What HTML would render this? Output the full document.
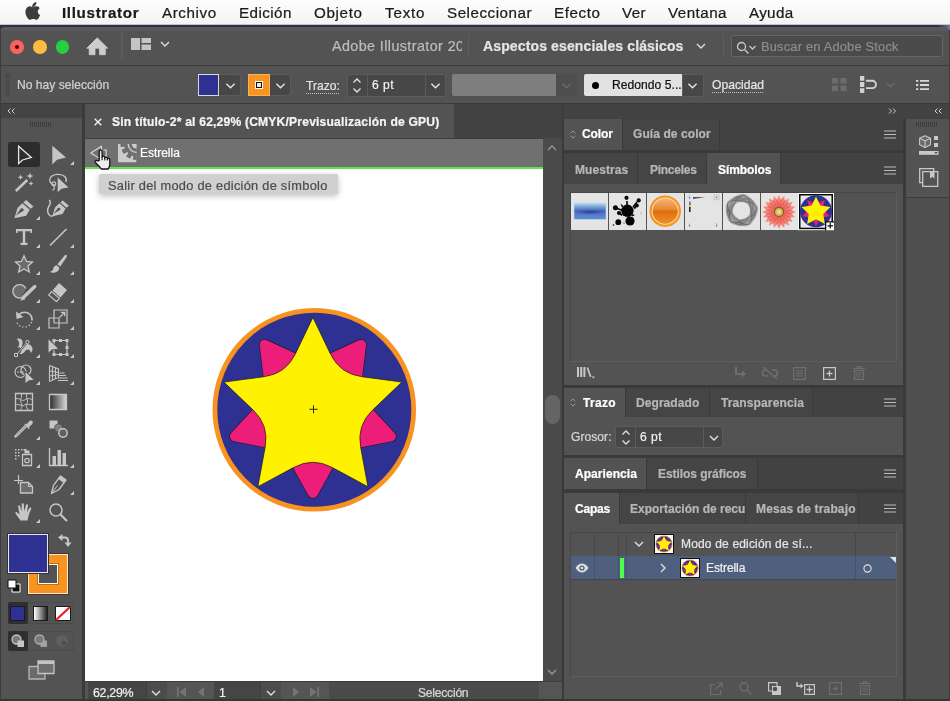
<!DOCTYPE html>
<html lang="es">
<head>
<meta charset="utf-8">
<title>Illustrator</title>
<style>
html,body{margin:0;padding:0}
body{width:950px;height:701px;position:relative;overflow:hidden;background:#535353;font-family:"Liberation Sans",sans-serif;font-size:13px;color:#dcdcdc}
.a{position:absolute}
.t{position:absolute;white-space:nowrap;line-height:1;will-change:transform;-webkit-text-stroke-width:.22px}
.b{font-weight:bold}
svg{position:absolute;overflow:visible}
#menubar{left:0;top:0;width:950px;height:25px;background:linear-gradient(#fdfdfd,#f4f4f4)}
#menubar .t{top:5px;font-size:15.6px;color:#1a1a1a}
.dd{position:absolute;background:#474747;border:1px solid #5c5c5c;box-sizing:border-box}
.tab{position:absolute;box-sizing:border-box;font-weight:bold;font-size:12.5px;color:#b4b4b4;background:#454545;border-right:1px solid #3a3a3a}
.tab.on{background:#535353;color:#ffffff}
.tabbar{position:absolute;background:#424242}
</style>
</head>
<body>

<!-- ===== macOS menu bar ===== -->
<div id="menubar" class="a">
  <svg style="left:21.500px;top:1px" width="19" height="20.200" viewBox="0 0 18 19"><path fill="#3c3c3c" d="M12.6 4.2c.7-.9 1.2-2 1-3.2-1 .1-2.200.7-2.900 1.600-.7.800-1.200 1.900-1.100 3 1.200.1 2.300-.5 3-1.400zM14.900 10c0-2.200 1.800-3.200 1.900-3.300-1-1.500-2.600-1.700-3.200-1.700-1.400-.1-2.600.8-3.300.8-.7 0-1.700-.8-2.800-.8-1.500 0-2.800.9-3.500 2.200-1.500 2.600-.4 6.400 1.100 8.500.7 1 1.500 2.200 2.700 2.100 1.100 0 1.500-.7 2.800-.7 1.300 0 1.600.7 2.800.7 1.200 0 1.900-1 2.600-2.100.8-1.200 1.100-2.300 1.200-2.400-.1 0-2.300-.9-2.300-3.300z"/></svg>
  <span class="t b" style="left:62.3px;font-size:15.2px;top:5.0px;letter-spacing:0.65px">Illustrator</span>
  <span class="t" style="left:162.0px;font-size:15.2px;top:5.0px;letter-spacing:0.58px">Archivo</span>
  <span class="t" style="left:238.7px;font-size:15.2px;top:5.0px;letter-spacing:0.44px">Edición</span>
  <span class="t" style="left:313.7px;font-size:15.2px;top:5.0px;letter-spacing:0.65px">Objeto</span>
  <span class="t" style="left:384.5px;font-size:15.2px;top:5.0px;letter-spacing:0.80px">Texto</span>
  <span class="t" style="left:447.0px;font-size:15.2px;top:5.0px;letter-spacing:0.51px">Seleccionar</span>
  <span class="t" style="left:554.3px;font-size:15.2px;top:5.0px;letter-spacing:0.57px">Efecto</span>
  <span class="t" style="left:622.0px;font-size:15.2px;top:5.0px;letter-spacing:0.36px">Ver</span>
  <span class="t" style="left:668.4px;font-size:15.2px;top:5.0px;letter-spacing:0.47px">Ventana</span>
  <span class="t" style="left:749.0px;font-size:15.2px;top:5.0px;letter-spacing:0.33px">Ayuda</span>
</div>
<div class="a" style="left:0;top:24px;width:950px;height:1px;background:#c4c4cc"></div>
<div class="a" style="left:0;top:25px;width:950px;height:8px;background:linear-gradient(90deg,#2f2f48 0,#2f2f48 938px,#7676a6 950px)"></div>

<!-- ===== App bar ===== -->
<div id="appbar" class="a" style="left:0;top:27px;width:950px;height:38px;background:linear-gradient(#5a5a5c 0,#5a5a5c 3.500px,#535353 4px);border-radius:5px 6px 0 0">
  <!-- traffic lights -->
  <div class="a" style="left:10.300px;top:13.300px;width:13.400px;height:13.400px;border-radius:50%;background:#fc615d"></div>
  <div class="a" style="left:15px;top:18px;width:4px;height:4px;border-radius:50%;background:#4c0102"></div>
  <div class="a" style="left:33.300px;top:13.300px;width:13.400px;height:13.400px;border-radius:50%;background:#fdbc40"></div>
  <div class="a" style="left:56.100px;top:13.300px;width:13.400px;height:13.400px;border-radius:50%;background:#27cf40"></div>
  <!-- home -->
  <svg style="left:87px;top:10px" width="20" height="18" viewBox="0 0 20 18"><path fill="#cdcdcd" d="M10.200 .8L-.2 11.200h2.400V17.700h5.800v-6.500h4.500v6.500h5.800v-6.500h2.400z" stroke="#cdcdcd" stroke-width=".8" stroke-linejoin="round"/></svg>
  <div class="a" style="left:121px;top:6px;width:1.500px;height:25px;background:#5d5d5d"></div>
  <!-- layout icon -->
  <svg style="left:131px;top:11px" width="20" height="12" viewBox="0 0 20 12"><path fill="#c4c4c4" d="M0 0h9v12H0zM10.500 0H20v5h-9.500zM10.500 6.500H20V12h-9.500z"/></svg>
  <svg style="left:160px;top:14px" width="10" height="6" viewBox="0 0 10 6"><path fill="none" stroke="#d8d8d8" stroke-width="1.500" d="M1 1l4 4 4-4"/></svg>
  <span class="t" style="left:331.7px;top:11.9px;font-size:14.3px;letter-spacing:.42px;color:#bdbdbd;width:129.5px;overflow:hidden">Adobe Illustrator 2020</span>
  <div class="a" style="left:467.500px;top:6px;width:1.500px;height:25px;background:#5d5d5d"></div>
  <span class="t b" style="left:482.5px;top:11.7px;font-size:14px;color:#e4e4e4;letter-spacing:0.13px">Aspectos esenciales clásicos</span>
  <svg style="left:696px;top:16px" width="10" height="6" viewBox="0 0 10 6"><path fill="none" stroke="#d8d8d8" stroke-width="1.500" d="M1 1l4 4 4-4"/></svg>
  <div class="a" style="left:722.800px;top:6px;width:1.500px;height:25px;background:#5d5d5d"></div>
  <!-- search -->
  <div class="a" style="left:731px;top:8px;width:212px;height:22px;box-sizing:border-box;border:1px solid #666;border-radius:3px;background:#4b4b4b"></div>
  <svg style="left:736px;top:13.800px" width="22" height="14" viewBox="0 0 22 14"><circle cx="5.500" cy="5.500" r="4" fill="none" stroke="#c8c8c8" stroke-width="1.300"/><path d="M8.500 8.500l4 4" stroke="#c8c8c8" stroke-width="1.500" fill="none"/><path d="M13.500 5l3 3 3-3" stroke="#c8c8c8" stroke-width="1.300" fill="none"/></svg>
  <span class="t" style="left:760.5px;top:14.2px;font-size:12.8px;color:#8c8c8c;letter-spacing:0.22px">Buscar en Adobe Stock</span>
</div>

<!-- ===== Control bar ===== -->
<div id="ctrlbar" class="a" style="left:0;top:65px;width:950px;height:39px;background:#535353;border-top:1px solid #3c3c3c;box-sizing:border-box">
  <!-- grip -->
  <div class="a" style="left:5px;top:8px;width:5px;height:22px;background:repeating-linear-gradient(#434343 0 1px,#535353 1px 2px)"></div>
  <span class="t" style="left:17.4px;top:13.2px;font-size:12.1px;color:#d2d2d2;letter-spacing:0.01px">No hay selección</span>
  <!-- fill swatch -->
  <div class="a" style="left:219px;top:8px;width:21.500px;height:22px;background:#474747;border:1px solid #5c5c5c;box-sizing:border-box;border-left:0;border-radius:0 3px 3px 0"></div><svg style="left:225.8px;top:16.599999999999998px" width="9" height="6" viewBox="0 0 9 6"><path fill="none" stroke="#e4e4e4" stroke-width="1.400" d="M.4 .8l4.100 4 4.100-4"/></svg>
  <div class="a" style="left:198px;top:8px;width:21px;height:22px;box-sizing:border-box;background:#2e3192;border:1px solid #d8d8d8"></div>
  <!-- stroke swatch -->
  <div class="a" style="left:270px;top:8px;width:20.500px;height:22px;background:#474747;border:1px solid #5c5c5c;box-sizing:border-box;border-left:0;border-radius:0 3px 3px 0"></div><svg style="left:275.8px;top:16.599999999999998px" width="9" height="6" viewBox="0 0 9 6"><path fill="none" stroke="#e4e4e4" stroke-width="1.400" d="M.4 .8l4.100 4 4.100-4"/></svg>
  <div class="a" style="left:248px;top:8px;width:22px;height:22px;box-sizing:border-box;background:#f7931e;border:1px solid #f9b25c"></div>
  <div class="a" style="left:254.800px;top:14.700000000000003px;width:8.400px;height:8.400px;box-sizing:border-box;background:#e8e8e8;border:1.300px solid #fff"></div>
  <div class="a" style="left:256px;top:15.900000000000006px;width:6px;height:6px;box-sizing:border-box;border:1.300px solid #111"></div>
  <span class="t" style="left:306.0px;top:14.2px;font-size:12.1px;color:#e0e0e0;letter-spacing:0.03px">Trazo:</span>
  <div class="a" style="left:306px;top:26.599999999999994px;width:34px;height:1px;background:repeating-linear-gradient(90deg,#c0c0c0 0 1px,transparent 1px 2px)"></div>
  <!-- spinner + field -->
  <div class="a" style="left:346.500px;top:8px;width:99.500px;height:22.5px;background:#474747;border:1px solid #5c5c5c;box-sizing:border-box;border-radius:3px"></div>
  <div class="a" style="left:367px;top:9px;width:1px;height:20.5px;background:#5c5c5c"></div>
  <div class="a" style="left:424.500px;top:9px;width:1px;height:20.5px;background:#5c5c5c"></div>
  <svg style="left:352px;top:10.5px" width="10" height="17" viewBox="0 0 10 17"><path fill="none" stroke="#e4e4e4" stroke-width="1.300" d="M1.500 5.500l3.500-3.500 3.500 3.500M1.500 11.500l3.500 3.500 3.500-3.500"/></svg>
  <span class="t" style="left:371.7px;top:13.2px;font-size:12.1px;color:#f0f0f0;letter-spacing:0.46px">6 pt</span>
  <svg style="left:430.8px;top:16.8px" width="9" height="6" viewBox="0 0 9 6"><path fill="none" stroke="#e4e4e4" stroke-width="1.400" d="M.4 .8l4.100 4 4.100-4"/></svg>
  <!-- disabled variable width -->
  <div class="a" style="left:452px;top:8px;width:103.500px;height:22px;background:#7e7e7e;border-radius:2px 0 0 2px"></div>
  <div class="a" style="left:555.500px;top:8px;width:21.500px;height:22px;background:#4e4e4e;border-radius:0 3px 3px 0"></div><svg style="left:562.0px;top:16.8px" width="9" height="6" viewBox="0 0 9 6"><path fill="none" stroke="#6c6c6c" stroke-width="1.400" d="M.4 .8l4.100 4 4.100-4"/></svg>
  <!-- brush -->
  <div class="a" style="left:682px;top:8px;width:21.500px;height:22.5px;background:#474747;border:1px solid #5c5c5c;box-sizing:border-box;border-radius:0 3px 3px 0"></div><svg style="left:688.0px;top:16.8px" width="9" height="6" viewBox="0 0 9 6"><path fill="none" stroke="#e4e4e4" stroke-width="1.400" d="M.4 .8l4.100 4 4.100-4"/></svg>
  <div class="a" style="left:583.800px;top:8px;width:98.600px;height:22px;background:#e2e2e2;border-radius:2px 0 0 2px"></div>
  <div class="a" style="left:591.500px;top:15.5px;width:7px;height:7px;border-radius:50%;background:#000"></div>
  <span class="t" style="left:612.0px;top:13.2px;font-size:12.1px;color:#111;letter-spacing:0.04px">Redondo 5...</span>
  <span class="t" style="left:711.7px;top:13.2px;font-size:12.1px;color:#e6e6e6;letter-spacing:0.04px">Opacidad</span>
  <div class="a" style="left:711.700px;top:25.599999999999994px;width:52px;height:1px;background:repeating-linear-gradient(90deg,#c0c0c0 0 1px,transparent 1px 2px)"></div>
  <!-- right icons -->
  <svg style="left:831.500px;top:12px" width="14.500" height="13" viewBox="0 0 14.500 13"><path fill="#6c6c6c" d="M0 0h6v5.500H0zM8.500 0h6v5.500h-6zM0 7.500h6V13H0zM8.500 7.500h6V13h-6z"/></svg>
  <svg style="left:860.300px;top:10.299999999999997px" width="17" height="17" viewBox="0 0 17 17"><path fill="#d2d2d2" d="M0 0h4.300v4.800H0zM0 6.100h4.300v4.800H0zM0 12.200h4.300V17H0z"/><path fill="none" stroke="#d2d2d2" stroke-width="1.900" d="M6 4.800h6.300a3.650 3.650 0 0 1 0 7.300H6"/></svg>
  <svg style="left:885.5px;top:15.899999999999995px" width="9" height="6" viewBox="0 0 9 6"><path fill="none" stroke="#6c6c6c" stroke-width="1.400" d="M.4 .8l4.100 4 4.100-4"/></svg>
  <svg style="left:916.300px;top:14px" width="13" height="10" viewBox="0 0 13 10"><path fill="#d8d8d8" d="M0 0h2.300v1.800H0zM4 0h9v1.800H4zM0 4.100h2.300v1.800H0zM4 4.100h9v1.800H4zM0 8.200h2.300V10H0zM4 8.200h9V10H4z"/></svg>
</div>

<!-- ===== Workspace background (dark gaps) ===== -->
<div class="a" style="left:0;top:103px;width:950px;height:598px;background:#3a3a3a"></div>

<!-- ===== Left toolbar ===== -->
<div id="tools" class="a" style="left:0;top:104px;width:82px;height:597px;background:#535353">
  <div class="a" style="left:0;top:0;width:82px;height:14px;background:#444"></div>
  <svg style="left:7px;top:4px" width="9" height="6" viewBox="0 0 9 6"><path fill="none" stroke="#cfcfcf" stroke-width="1" d="M3.500 0.500L1 3l2.500 2.500M7.500 0.500L5 3l2.500 2.500"/></svg>
  <div class="a" style="left:30px;top:18px;width:22px;height:5px;background:repeating-linear-gradient(90deg,#3c3c3c 0 1px,#535353 1px 2px)"></div>
  <div class="a" style="left:8px;top:38px;width:32px;height:25px;background:#2d2d2d;border-radius:3px"></div>
  <svg style="left:14px;top:40px" width="20" height="20" viewBox="0 0 20 20"><path d="M4.600 2.300V19.600L8.500 16 17.300 13.400z" fill="none" stroke="#e6e6e6" stroke-width="1.300" stroke-linejoin="miter"/></svg>
  <svg style="left:48px;top:40px" width="20" height="20" viewBox="0 0 20 20"><path d="M4.300 1.800V20.400l4.700-4.600 9-2.400z" fill="#c6c6c6"/></svg><svg style="left:70px;top:57px" width="4" height="4" viewBox="0 0 4 4"><path fill="#c8c8c8" d="M4 0v4H0z"/></svg>
  <svg style="left:14px;top:67.5px" width="20" height="20" viewBox="0 0 20 20"><path d="M1.800 19L13.300 8" stroke="#c6c6c6" stroke-width="2.500" fill="none"/><path fill="#c6c6c6" d="M16 .5l.9 2.600 2.600.9-2.600.9-.9 2.600-.9-2.600-2.600-.9 2.600-.9zM6.500 2.500l.8 2 2 .8-2 .8-.8 2-.8-2-2-.8 2-.8zM17 9l.7 1.800 1.800.7-1.800.7-.7 1.800-.7-1.800-1.800-.7 1.800-.7z"/></svg>
  <svg style="left:48px;top:67.5px" width="20" height="20" viewBox="0 0 20 20"><path d="M7 13.300C2.500 12.500.5 9 2.300 5.800 4.500 1.800 13.500 1 17 4.800c1.500 1.700 1.600 3.600 1 5.200" stroke="#c6c6c6" fill="none" stroke-width="1.300"/><circle cx="5.800" cy="11.800" r="1.900" stroke="#c6c6c6" fill="none" stroke-width="1.200"/><path d="M5.500 13.800c1.800 1.300 1 3.500-1 4.700" stroke="#c6c6c6" fill="none" stroke-width="1.200"/><path d="M9.700 5.500v14.700l3.600-3.400 7.200-1.300z" fill="#c6c6c6"/></svg>
  <svg style="left:14px;top:95px" width="20" height="20" viewBox="0 0 20 20"><g transform="matrix(1.23 0 0 1.08 -2.06 -1.7)"><path fill="#c6c6c6" d="M11.500 2.500l6 6-2.200 2.200-6-6z"/><path fill="#c6c6c6" d="M8.500 5.500l6 6-3 5.500-9.500 2.500 2.500-9.500zM8.300 13.200a1.500 1.500 0 1 0-1.700-1.700L3.200 16.800z" fill-rule="evenodd"/></g></svg><svg style="left:36px;top:112px" width="4" height="4" viewBox="0 0 4 4"><path fill="#c8c8c8" d="M4 0v4H0z"/></svg>
  <svg style="left:48px;top:95px" width="20" height="20" viewBox="0 0 20 20"><g transform="matrix(1.23 0 0 1.06 -1.85 -1.2)"><path fill="#c6c6c6" d="M13.500 2.500l5 5-2 2-5-5z"/><path fill="#c6c6c6" d="M10.800 5.200l5 5-2.500 5-8.300 2.300 2.200-8.300zM10.500 12a1.300 1.300 0 1 0-1.500-1.500L6 15z" fill-rule="evenodd"/><path d="M2.500 2c1.500 2 1 4-.5 6.500-1.500 3-1 7 1.500 8.500 1.200.6 2.500 0 3-1" stroke="#c6c6c6" fill="none" stroke-width="1.200"/></g></svg>
  <svg style="left:14px;top:122.5px" width="20" height="20" viewBox="0 0 20 20"><path fill="#c6c6c6" d="M2 2h16v4h-1.500V4.200H11.200V15.800h2.300V18h-7v-2.200h2.300V4.200H3.500V6H2z"/></svg><svg style="left:36px;top:139.5px" width="4" height="4" viewBox="0 0 4 4"><path fill="#c8c8c8" d="M4 0v4H0z"/></svg>
  <svg style="left:48px;top:122.5px" width="20" height="20" viewBox="0 0 20 20"><path d="M2 18.500L18.500 2" stroke="#c6c6c6" stroke-width="1.600" fill="none"/></svg><svg style="left:70px;top:139.5px" width="4" height="4" viewBox="0 0 4 4"><path fill="#c8c8c8" d="M4 0v4H0z"/></svg>
  <svg style="left:14px;top:150px" width="20" height="20" viewBox="0 0 20 20"><path d="M10 1.800l2.500 5.600 6 .6-4.500 4 1.300 6-5.300-3.100-5.300 3.100 1.300-6-4.500-4 6-.6z" fill="#6c6c6c" stroke="#c6c6c6" stroke-width="1.300" stroke-linejoin="miter"/></svg><svg style="left:36px;top:167px" width="4" height="4" viewBox="0 0 4 4"><path fill="#c8c8c8" d="M4 0v4H0z"/></svg>
  <svg style="left:48px;top:150px" width="20" height="20" viewBox="0 0 20 20"><path fill="#c6c6c6" d="M18.500 1c.8.600.3 1.800-.3 2.800l-6 8.700-2.800-2.200 6.800-8.200c.7-.8 1.600-1.600 2.300-1.100zM8.500 11.300l2.700 2.200c.3 2.500-1.500 4.500-4 5-2 .4-4.200 0-5.200-.8 1.800-.4 2.700-1.200 3.200-3 .4-1.700 1.500-3.200 3.300-3.400z"/></svg><svg style="left:70px;top:167px" width="4" height="4" viewBox="0 0 4 4"><path fill="#c8c8c8" d="M4 0v4H0z"/></svg>
  <svg style="left:14px;top:177.5px" width="20" height="20" viewBox="0 0 20 20"><path d="M8.500 15.300A6.700 6.700 0 1 1 11.700 6.500" fill="#6c6c6c" stroke="#c6c6c6" stroke-width="1.300"/><path d="M10 14.800L20.800 4.600" stroke="#535353" stroke-width="5.500" fill="none"/><path d="M9.800 15L20.800 4.600" stroke="#c6c6c6" stroke-width="3.400" fill="none" stroke-linecap="round"/><path fill="#c6c6c6" d="M6.600 18.700l1.600-4.600 3.200 3.200z"/></svg><svg style="left:36px;top:194.5px" width="4" height="4" viewBox="0 0 4 4"><path fill="#c8c8c8" d="M4 0v4H0z"/></svg>
  <svg style="left:48px;top:177.5px" width="20" height="20" viewBox="0 0 20 20"><path fill="#c6c6c6" d="M11 1l8 7-6.500 7.500-8-7z"/><path d="M3.600 9.600l7.800 6.800-2.900 3.300-7.800-6.800z" stroke="#c6c6c6" fill="none" stroke-width="1.200"/></svg><svg style="left:70px;top:194.5px" width="4" height="4" viewBox="0 0 4 4"><path fill="#c8c8c8" d="M4 0v4H0z"/></svg>
  <svg style="left:14px;top:205px" width="20" height="20" viewBox="0 0 20 20"><path d="M5 5.500C8 2.500 13 2.500 16 5.500c1.800 1.800 2.300 4 2 6" stroke="#c6c6c6" fill="none" stroke-width="1.500"/><path fill="#c6c6c6" d="M2 2.500l.5 7.500L9.500 8z"/><path d="M17.500 13c-1.500 4.500-7 6.500-11.500 4-1.800-1-3-2.800-3.500-4.500" stroke="#c6c6c6" fill="none" stroke-width="1.500" stroke-dasharray="1.200 2.200"/></svg><svg style="left:36px;top:222px" width="4" height="4" viewBox="0 0 4 4"><path fill="#c8c8c8" d="M4 0v4H0z"/></svg>
  <svg style="left:48px;top:205px" width="20" height="20" viewBox="0 0 20 20"><path d="M6 1h13v13H6z" stroke="#c6c6c6" fill="none" stroke-width="1.200"/><path d="M1 9h10v10H1z" stroke="#c6c6c6" fill="none" stroke-width="1.200"/><path d="M11.500 8.500l5-5M12.800 3.300h3.900v3.900" stroke="#c6c6c6" fill="none" stroke-width="1.300"/></svg><svg style="left:70px;top:222px" width="4" height="4" viewBox="0 0 4 4"><path fill="#c8c8c8" d="M4 0v4H0z"/></svg>
  <svg style="left:14px;top:232.5px" width="20" height="20" viewBox="0 0 20 20"><path fill="#c6c6c6" d="M4.500 1.500c2.500 0 4.200 1.500 4.200 3.800 0 1.500-.8 2.800-.3 4.200 1.500-2 4-3 6.300-2.300 2.300.7 3.800 2.700 3.800 5 0 1.600-.8 3-2.200 3.800.3-1.800-.4-3.200-1.900-3.500-1.600-.3-2.700.8-3.800 2.200-1.300 1.600-3 2.800-5.600 2.300 1.800-1.200 2.600-2.800 2.200-4.600C6.700 10.500 5 10 3.500 10.800 4.800 9 5.500 7.500 5 5.500 4.700 4 4 2.800 2.500 2c.6-.3 1.300-.5 2-.5z"/><path d="M1.800 18.200L13.200 5.300" stroke="#535353" stroke-width="2.200" fill="none"/><path d="M1.800 18.200L13.200 5.300" stroke="#c6c6c6" stroke-width="1" fill="none"/><circle cx="13.400" cy="5" r="1.700" fill="#535353" stroke="#c6c6c6" stroke-width="1"/><path d="M.5 16.500h3v3h-3z" fill="#535353" stroke="#c6c6c6" stroke-width="1"/></svg><svg style="left:36px;top:249.5px" width="4" height="4" viewBox="0 0 4 4"><path fill="#c8c8c8" d="M4 0v4H0z"/></svg>
  <svg style="left:48px;top:232.5px" width="20" height="20" viewBox="0 0 20 20"><path d="M6 3.500h13v14H6z" stroke="#c6c6c6" fill="none" stroke-width="1.200" stroke-dasharray="0"/><path fill="#c6c6c6" d="M4.500 2h3v3h-3zM11 2h3v3h-3zM17.500 2h3v3h-3zM17.500 9h3v3h-3zM17.500 16h3v3h-3zM11 16h3v3h-3zM4.500 16h3v3h-3z"/><path d="M0 1.500v15l4-3.500 7-1z" fill="#c6c6c6" stroke="#535353" stroke-width="1"/></svg><svg style="left:70px;top:249.5px" width="4" height="4" viewBox="0 0 4 4"><path fill="#c8c8c8" d="M4 0v4H0z"/></svg>
  <svg style="left:14px;top:260px" width="20" height="20" viewBox="0 0 20 20"><circle cx="6.500" cy="8" r="5.500" stroke="#c6c6c6" fill="none" stroke-width="1.200"/><circle cx="12" cy="6" r="5" stroke="#c6c6c6" fill="none" stroke-width="1.200"/><path d="M3.500 8h6" stroke="#c6c6c6" fill="none" stroke-width="1.500" stroke-dasharray="1.200 1.200"/><path d="M11 7v13l3.500-3 6-1z" fill="#c6c6c6" stroke="#535353" stroke-width="1"/></svg><svg style="left:36px;top:277px" width="4" height="4" viewBox="0 0 4 4"><path fill="#c8c8c8" d="M4 0v4H0z"/></svg>
  <svg style="left:48px;top:260px" width="20" height="20" viewBox="0 0 20 20"><path d="M1.500 1.500v16M1.500 1.500L10.500 5v8.500L1.500 17.500M4.500 2.700v13.500M7.500 3.800v11M1.500 6.800l9 1.700M1.500 12l9-1.500" stroke="#c6c6c6" fill="none" stroke-width="1.100"/><path d="M11.500 9h5M11 11.500h7M10.500 14h9M10 16.500h10" stroke="#c6c6c6" fill="none" stroke-width="1.100"/></svg><svg style="left:70px;top:277px" width="4" height="4" viewBox="0 0 4 4"><path fill="#c8c8c8" d="M4 0v4H0z"/></svg>
  <svg style="left:14px;top:287.5px" width="20" height="20" viewBox="0 0 20 20"><path d="M1.500 1.500h17v17h-17z" stroke="#c6c6c6" fill="none" stroke-width="1.300"/><path d="M1.500 7c4-2 6 3 9 1s5-2 8 0M1.500 13c3-2 6 2 9 0s5 1 8-1M7 1.500c2 4-2 6 0 9s1 5-1 8M13 1.500c-2 4 2 7 0 10s1 5 1 7" stroke="#c6c6c6" fill="none" stroke-width="1"/></svg>
  <svg style="left:48px;top:287.5px" width="20" height="20" viewBox="0 0 20 20"><defs><linearGradient id="gt" x1="0" x2="1"><stop offset="0" stop-color="#2a2a2a"/><stop offset="1" stop-color="#d8d8d8"/></linearGradient></defs><path d="M1.500 2.500h17v15h-17z" fill="url(#gt)" stroke="#c6c6c6" stroke-width="1.300"/></svg>
  <svg style="left:14px;top:315px" width="20" height="20" viewBox="0 0 20 20"><path d="M12.500 7.500l-9 9c-.8.800-1.800 2-2.500 1.500-.6-.6.600-1.800 1.400-2.600l9-9" stroke="#c6c6c6" fill="none" stroke-width="1.300"/><path fill="#c6c6c6" d="M10.500 5.500l1-1 1 1 2.500-3c1-1.200 2.500-1.200 3.300-.4.800.8.800 2.300-.4 3.300l-3 2.500 1 1-1 1z"/></svg><svg style="left:36px;top:332px" width="4" height="4" viewBox="0 0 4 4"><path fill="#c8c8c8" d="M4 0v4H0z"/></svg>
  <svg style="left:48px;top:315px" width="20" height="20" viewBox="0 0 20 20"><path fill="#c6c6c6" d="M1.500 1.500h8v8h-8z"/><circle cx="10.500" cy="9" r="4" fill="#808080" stroke="#535353" stroke-width=".8"/><circle cx="15" cy="14" r="4.200" fill="#606060" stroke="#c6c6c6" stroke-width="1.500"/></svg>
  <svg style="left:14px;top:342.5px" width="20" height="20" viewBox="0 0 20 20"><path d="M8.500 7.500h9v11h-9z" stroke="#c6c6c6" fill="none" stroke-width="1.300"/><path fill="#c6c6c6" d="M10.500 3.500h5v3h-5zM9.500 2h3v1.500h-3z"/><circle cx="13" cy="13.500" r="2.200" stroke="#c6c6c6" fill="none" stroke-width="1.300"/><path fill="#c6c6c6" d="M1 2h1.500v1.500H1zM4 2h1.500v1.500H4zM7 2h1.500v1.500H7zM1 5h1.500v1.500H1zM4 5h1.500v1.500H4zM1 8h1.500v1.500H1zM4 8h1.500v1.500H4zM1 11h1.500v1.500H1z"/></svg><svg style="left:36px;top:359.5px" width="4" height="4" viewBox="0 0 4 4"><path fill="#c8c8c8" d="M4 0v4H0z"/></svg>
  <svg style="left:48px;top:342.5px" width="20" height="20" viewBox="0 0 20 20"><path d="M1.500 1v17.500H20" stroke="#c6c6c6" fill="none" stroke-width="1.300"/><path fill="#c6c6c6" d="M4.500 9h3.500v9H4.500zM9.500 3h3.500v15H9.500zM14.500 6h3.500v12h-3.500z"/></svg><svg style="left:70px;top:359.5px" width="4" height="4" viewBox="0 0 4 4"><path fill="#c8c8c8" d="M4 0v4H0z"/></svg>
  <svg style="left:14px;top:370px" width="20" height="20" viewBox="0 0 20 20"><path d="M0 6.500h9M4.500 1v9" stroke="#c6c6c6" fill="none" stroke-width="1.200"/><path d="M6.500 8.500h8l4 4v6.500h-12z" fill="#6c6c6c" stroke="#c6c6c6" stroke-width="1.300"/><path d="M14.500 8.500v4h4" stroke="#c6c6c6" fill="none" stroke-width="1.100"/></svg>
  <svg style="left:48px;top:370px" width="20" height="20" viewBox="0 0 20 20"><path d="M12.500 2l5.500 4-7 9.500-7.500 4 2-8.200z" stroke="#c6c6c6" fill="none" stroke-width="1.300" stroke-linejoin="round"/><path fill="#c6c6c6" d="M12.500 2l5.500 4-2.200 3-5.500-4z"/><path d="M3.500 19.500l6-8" stroke="#c6c6c6" fill="none" stroke-width="1"/></svg><svg style="left:70px;top:387px" width="4" height="4" viewBox="0 0 4 4"><path fill="#c8c8c8" d="M4 0v4H0z"/></svg>
  <svg style="left:14px;top:397.5px" width="20" height="20" viewBox="0 0 20 20"><path fill="#c6c6c6" d="M6.500 18.500c-1.500-2-3.500-5-5-7-.6-.9.600-2 1.600-1.100L5.500 12.500 4.200 4.500c-.2-1.300 1.600-1.600 1.900-.3L7.500 9.500 7.700 2.300c0-1.400 2-1.400 2.100 0L10.300 9.300 12 3c.3-1.300 2.200-.9 2 .4L12.900 10.300 15.500 6c.7-1.100 2.300-.2 1.700.9-1 2.200-2 4.500-2.500 6.500-.4 1.700-.7 3.300-1.200 5.100z"/></svg><svg style="left:36px;top:414.5px" width="4" height="4" viewBox="0 0 4 4"><path fill="#c8c8c8" d="M4 0v4H0z"/></svg>
  <svg style="left:48px;top:397.5px" width="20" height="20" viewBox="0 0 20 20"><circle cx="8" cy="8" r="6" stroke="#c6c6c6" fill="none" stroke-width="1.500"/><path d="M12.500 12.500l6.500 6.500" stroke="#c6c6c6" stroke-width="2.200" fill="none"/></svg>
  <div class="a" style="left:28px;top:450px;width:40px;height:40px;box-sizing:border-box;background:#f7931e;border:1px solid #ffe9c8;outline:1px solid #3a3a3a"></div>
  <div class="a" style="left:38px;top:460px;width:20px;height:20px;box-sizing:border-box;background:#535353;border:1px solid #ffffff;outline:1px solid #c07010"></div>
  <div class="a" style="left:8px;top:430px;width:40px;height:39px;box-sizing:border-box;background:#2e3192;border:1px solid #e8e8e8;outline:1px solid #333"></div>
  <svg style="left:58px;top:430px" width="13" height="13" viewBox="0 0 13 13"><path d="M3.500 3.500h3.500a3 3 0 0 1 3 3v3" fill="none" stroke="#c6c6c6" stroke-width="2"/><path fill="#c6c6c6" d="M0 3.500l4.500-3.500v7zM10 13l-3.500-4.500h7z"/></svg>
  <svg style="left:7px;top:475px" width="14" height="14" viewBox="0 0 14 14"><path d="M5 5h8v8H5z" fill="#111" stroke="#fff" stroke-width="1.200"/><path d="M5.500 5.500h7v7h-7z" fill="none" stroke="#111" stroke-width="2.200"/><path d="M5 5h8v8H5z" fill="none" stroke="#fff" stroke-width="1"/><path d="M1 1h8v8H1z" fill="#fff" stroke="#111" stroke-width="1"/></svg>
  <div class="a" style="left:8px;top:498px;width:66px;height:22px;box-sizing:border-box;border:1px solid #4a4a4a;border-radius:2px"></div>
  <div class="a" style="left:8px;top:498px;width:20px;height:22px;background:#2f2f2f;border-radius:2px"></div>
  <div class="a" style="left:10px;top:502px;width:15px;height:15px;box-sizing:border-box;background:#2e3192;border:1px solid #1a1a1a"></div>
  <div class="a" style="left:33px;top:502px;width:15px;height:15px;box-sizing:border-box;background:linear-gradient(90deg,#fff,#222);border:1px solid #1a1a1a"></div>
  <svg style="left:55px;top:502px" width="16" height="15" viewBox="0 0 16 15"><path d="M.5.500h15v14H.5z" fill="#fff" stroke="#1a1a1a" stroke-width="1"/><path d="M1 14L15 1" stroke="#ee1c24" stroke-width="2.200"/></svg>
  <div class="a" style="left:8px;top:527px;width:66px;height:20px;box-sizing:border-box;border:1px solid #4a4a4a;border-radius:2px"></div>
  <div class="a" style="left:8px;top:527px;width:20px;height:20px;background:#2f2f2f;border-radius:2px"></div>
  <svg style="left:11px;top:530px" width="14" height="14" viewBox="0 0 14 14"><circle cx="5.500" cy="5.500" r="4.500" fill="#7a7a7a" stroke="#c6c6c6" stroke-width="1.300"/><path d="M6.500 6.500h6.500v6.500H6.500z" fill="#c6c6c6"/></svg>
  <svg style="left:34px;top:530px" width="14" height="14" viewBox="0 0 14 14"><path d="M6.500 6.500h6.500v6.500H6.500z" fill="#a0a0a0"/><circle cx="5.500" cy="5.500" r="4.500" fill="#7a7a7a" stroke="#b0b0b0" stroke-width="1.300"/></svg>
  <svg style="left:56px;top:531px" width="12" height="12" viewBox="0 0 12 12"><circle cx="6" cy="6" r="5" fill="#5e5e5e" stroke="#636363" stroke-width="1.300"/><path d="M6 6h4v4H6z" fill="#4e4e4e"/></svg>
  <svg style="left:28px;top:556px" width="27" height="20" viewBox="0 0 27 20"><path d="M1 6.500h16v12.500H1z" fill="#6a6a6a" stroke="#b4b4b4" stroke-width="1.300"/><path d="M10 1h16v12.500H10z" fill="#6e6e6e" stroke="#c4c4c4" stroke-width="1.300"/><path d="M10 1h16v3H10z" fill="#c4c4c4"/></svg>
</div>

<!-- ===== Document area ===== -->
<div id="doc" class="a" style="left:85px;top:104px;width:476.500px;overflow:hidden;height:597px;background:#424242">
  <!-- tab bar -->
  <div class="a" style="left:0;top:0;width:369px;height:34px;background:#535353"></div>
  <svg style="left:9px;top:14px" width="8" height="8" viewBox="0 0 8 8"><path d="M.7.7l6.600 6.600M7.300.7L.7 7.300" stroke="#f0f0f0" stroke-width="1.400" fill="none"/></svg>
  <span class="t b" style="left:26.8px;top:12.1px;font-size:12.1px;color:#f4f4f4;letter-spacing:0.19px">Sin título-2* al 62,29% (CMYK/Previsualización de GPU)</span>
  <!-- isolation bar -->
  <div class="a" style="left:0;top:34px;width:458px;height:29px;background:#707070;border-top:1px solid #3e3e3e;box-sizing:border-box"></div>
  <div class="a" style="left:0;top:63px;width:458px;height:2px;background:#62e54c"></div>
  <!-- canvas -->
  <div class="a" style="left:0;top:65px;width:458px;height:512px;background:#ffffff;overflow:hidden"></div>
  <svg style="left:0;top:0" width="458" height="597" viewBox="0 0 458 597">
    <circle cx="229.3" cy="305.8" r="99.400" fill="#2e3192" stroke="#f7931e" stroke-width="4.800"/>
    <path d="M276.1 240.7L269.7 293.4L305.9 332.3L253.8 342.6L227.9 389.0L202.0 342.6L149.9 332.3L186.1 293.4L179.7 240.7L227.9 263.0z" fill="#1a1a1a" stroke="#1a1a1a" stroke-width="11.200" stroke-linejoin="round"/>
    <path d="M276.1 240.7L269.7 293.4L305.9 332.3L253.8 342.6L227.9 389.0L202.0 342.6L149.9 332.3L186.1 293.4L179.7 240.7L227.9 263.0z" fill="#ed1e79" stroke="#ed1e79" stroke-width="10" stroke-linejoin="round"/>
    <path d="M227.9 213.4L245.4 249.9Q254.9 269.8 276.7 272.7L316.9 278.1L287.6 306.0Q271.6 321.2 275.6 342.9L282.9 382.7L247.3 363.5Q227.9 353.0 208.5 363.5L172.9 382.7L180.2 342.9Q184.2 321.2 168.2 306.0L138.9 278.1L179.1 272.7Q200.9 269.8 210.4 249.9z" fill="#fff200" stroke="#1a1a1a" stroke-width=".7" stroke-linejoin="miter"/>
    <path d="M224.5 305.3h8M228.5 301.3v8" stroke="#222" stroke-width="1" fill="none"/>
  </svg>
  <!-- back arrow + hand cursor -->
  <svg style="left:5px;top:41px" width="18" height="16" viewBox="0 0 18 16"><path d="M11.500 1.200v13.400L.8 8z" fill="none" stroke="#dcdcdc" stroke-width="1.100" stroke-linejoin="round"/><path d="M13.500 5h2.700v6.300h-2.700" fill="none" stroke="#dcdcdc" stroke-width="1.100"/></svg>
  <svg style="left:7.500px;top:45px" width="19" height="21" viewBox="0 0 19 21"><path d="M6.200 11.500V2.600c0-1.900 2.900-1.900 2.900 0V8c.2-1.200 2.600-1.200 2.700.3v.7c.2-1.200 2.500-1.100 2.600.4v.8c.2-1.100 2.300-1 2.400.5V15c0 2.300-.9 3.600-1.500 5H8.200C7 18 4.500 15.500 2.300 13.500c-1.100-1.200.4-2.600 1.700-1.700z" fill="#efedf0" stroke="#151515" stroke-width="1.300" stroke-linejoin="round"/><path d="M9.100 8v3.200M11.800 9v2.400M14.400 9.500v2" stroke="#151515" stroke-width="1.100" fill="none"/></svg>
  <!-- symbol icon -->
  <svg style="left:33px;top:39.500px" width="18.500" height="18.500" viewBox="0 0 18.500 18.500"><defs><clipPath id="sq"><rect width="18.500" height="18.500"/></clipPath></defs><g clip-path="url(#sq)"><rect width="18.500" height="18.500" fill="#cdcdcd"/><g fill="#707070"><circle cx="18.500" cy="0" r="12.200"/><rect x="10.500" y="-2.200" width="5.500" height="4.400" transform="translate(18.500 0) rotate(95)"/><rect x="10.500" y="-2.200" width="5.500" height="4.400" transform="translate(18.500 0) rotate(122)"/><rect x="10.500" y="-2.200" width="5.500" height="4.400" transform="translate(18.500 0) rotate(150)"/><rect x="10.500" y="-2.200" width="5.500" height="4.400" transform="translate(18.500 0) rotate(177)"/></g><circle cx="18.500" cy="0" r="8.300" fill="none" stroke="#d6d6d6" stroke-width="1.300"/><circle cx="18.500" cy="0" r="4.600" fill="#cdcdcd"/></g></svg>
  <span class="t" style="left:54.5px;top:42.7px;font-size:12px;color:#ffffff;letter-spacing:-0.03px">Estrella</span>
  <!-- tooltip -->
  <div class="a" style="left:14px;top:70.300px;width:238.500px;height:20px;background:#d0d0d0;border-radius:2px;box-shadow:0 2px 6px rgba(0,0,0,.26)"></div>
  <span class="t" style="left:22.9px;top:75.8px;font-size:12.8px;color:#4c4c4c;letter-spacing:0.27px">Salir del modo de edición de símbolo</span>
  <!-- vertical scrollbar -->
  <div class="a" style="left:458px;top:34px;width:18.500px;height:543px;background:#4a4a4a"></div>
  <svg style="left:462px;top:41px" width="10" height="6" viewBox="0 0 10 6"><path fill="none" stroke="#989898" stroke-width="1.300" d="M1 5l4-4 4 4"/></svg>
  <svg style="left:462px;top:565px" width="10" height="6" viewBox="0 0 10 6"><path fill="none" stroke="#989898" stroke-width="1.300" d="M1 1l4 4 4-4"/></svg>
  <div class="a" style="left:459.600px;top:291px;width:15.800px;height:29px;background:#656565;border-radius:7.900px"></div>
  <!-- status bar -->
  <div class="a" style="left:0;top:577px;width:476.500px;height:20px;background:#555555;border-top:1px solid #3c3c3c;box-sizing:border-box"></div>
  <div class="a" style="left:3px;top:578px;width:58px;height:19px;background:#454545"></div>
  <span class="t" style="left:7.9px;top:582.5px;font-size:12.4px;color:#f0f0f0;letter-spacing:-0.31px">62,29%</span>
  <div class="a" style="left:61px;top:578px;width:21px;height:19px;background:#4c4c4c;border-left:1px solid #3e3e3e;box-sizing:border-box"></div><svg style="left:65.5px;top:586px" width="10" height="6" viewBox="0 0 10 6"><path fill="none" stroke="#e0e0e0" stroke-width="1.400" d="M1 1l4 4 4-4"/></svg>
  <svg style="left:91.500px;top:583px" width="28" height="10" viewBox="0 0 28 10"><path fill="#747474" d="M0 0h1.800v10H0zM9 0v10L2.500 5zM27 0v10l-6-5z"/></svg>
  <div class="a" style="left:129px;top:578px;width:46px;height:19px;background:#454545"></div>
  <span class="t" style="left:134.4px;top:582.5px;font-size:12.4px;color:#f0f0f0;letter-spacing:-0.91px">1</span>
  <div class="a" style="left:175px;top:578px;width:21px;height:19px;background:#4c4c4c;border-left:1px solid #3e3e3e;box-sizing:border-box"></div><svg style="left:180.5px;top:586px" width="10" height="6" viewBox="0 0 10 6"><path fill="none" stroke="#e0e0e0" stroke-width="1.400" d="M1 1l4 4 4-4"/></svg>
  <svg style="left:208px;top:583px" width="26" height="10" viewBox="0 0 26 10"><path fill="#747474" d="M0 0v10l6-5zM17 0v10l6.500-5zM24.200 0H26v10h-1.800z"/></svg>
  <div class="a" style="left:244px;top:578px;width:210px;height:19px;background:#4b4b4b"></div>
  <span class="t" style="left:332.5px;top:582.8px;font-size:12.1px;color:#d8d8d8;letter-spacing:-0.23px">Selección</span>
</div>

<!-- ===== Right panels ===== -->
<div id="panels" class="a" style="left:565px;top:104px;width:338px;height:597px;background:#3a3a3a">
  <div class="a" style="left:-2px;top:0;width:387px;height:15px;background:#424242"></div>
  <svg style="left:323px;top:4px" width="9" height="6" viewBox="0 0 9 6"><path fill="none" stroke="#cfcfcf" stroke-width="1" d="M1 .5L3.500 3 1 5.500M5 .5L7.500 3 5 5.500"/></svg>
  <div class="tabbar" style="left:-1px;top:15px;width:339px;height:31px"></div>
  <div class="tab on" style="left:-1px;top:15px;width:59px;height:31px"></div>
  <div class="tab" style="left:58px;top:15px;width:97px;height:31px"></div>
  <svg style="left:4.5px;top:26px" width="6" height="9" viewBox="0 0 6 9"><path fill="none" stroke="#a4a4a4" stroke-width=".9" d="M.6 3.300L3 .9l2.400 2.400M.6 5.700L3 8.100l2.400-2.400"/></svg>
  <span class="t b" style="left:16.7px;top:23.8px;font-size:12px;color:#fff;letter-spacing:-0.10px">Color</span>
  <span class="t b" style="left:68.3px;top:23.8px;font-size:12px;color:#b6b6b6;letter-spacing:0.08px">Guía de color</span>
  <svg style="left:319px;top:26px" width="12" height="9" viewBox="0 0 12 9"><path d="M0 1h12M0 4.500h12M0 8h12" stroke="#bcbcbc" stroke-width="1.100" fill="none"/></svg>
  <div class="a" style="left:0;top:46px;width:338px;height:4px;background:#3a3a3a"></div>
  <div class="tabbar" style="left:-1px;top:49.30000000000001px;width:339px;height:30.9px"></div>
  <div class="tab" style="left:-1px;top:49.30000000000001px;width:74px;height:30.9px"></div>
  <div class="tab" style="left:73px;top:49.30000000000001px;width:69px;height:30.9px"></div>
  <div class="tab on" style="left:142px;top:49.30000000000001px;width:74px;height:30.9px"></div>
  <span class="t b" style="left:10.2px;top:59.8px;font-size:12px;color:#b6b6b6;letter-spacing:0.07px">Muestras</span>
  <span class="t b" style="left:84.5px;top:59.8px;font-size:12px;color:#b6b6b6;letter-spacing:-0.27px">Pinceles</span>
  <span class="t b" style="left:152.5px;top:59.8px;font-size:12px;color:#fff;letter-spacing:-0.07px">Símbolos</span>
  <svg style="left:319px;top:62px" width="12" height="9" viewBox="0 0 12 9"><path d="M0 1h12M0 4.500h12M0 8h12" stroke="#bcbcbc" stroke-width="1.100" fill="none"/></svg>
  <div class="a" style="left:-1px;top:80px;width:339px;height:201px;background:#535353"></div>
  <div class="a" style="left:5px;top:88px;width:327px;height:170px;box-sizing:border-box;border:1px solid #5e5e5e;border-top-color:#484848;border-left-color:#484848"></div>
  <svg style="left:6px;top:89px" width="37" height="37" viewBox="0 0 37 37"><rect width="37" height="37" fill="#e4e4e4"/><defs><linearGradient id="g1" x1="0" y1="0" x2="0" y2="1"><stop offset="0" stop-color="#b4dcf4"/><stop offset=".45" stop-color="#4a6cc0"/><stop offset="1" stop-color="#5f8fd4"/></linearGradient><radialGradient id="g1b" cx=".5" cy=".55" r=".5" gradientTransform="matrix(1 0 0 .3 0 .385)"><stop offset="0" stop-color="#2c3e9c"/><stop offset="1" stop-color="#2c3e9c" stop-opacity="0"/></radialGradient></defs><rect x="3" y="10" width="32" height="16.500" fill="url(#g1)" stroke="#c4dcf0" stroke-width=".6"/><rect x="3" y="10" width="32" height="16.500" fill="url(#g1b)"/></svg>
  <svg style="left:44px;top:89px" width="37" height="37" viewBox="0 0 37 37"><rect width="37" height="37" fill="#e4e4e4"/><g fill="#050505"><circle cx="18.400" cy="17.800" r="6.200"/><circle cx="21" cy="28" r="4.600"/><path d="M14 20l-4 1.500 3 1.500zM20 23l-2 3h5zM24 14l4-1.500-2 4zM14.500 13l-3-2.500 1.500 4zM23 21l3 1-3 1.500z"/><circle cx="9.300" cy="29.200" r="2.900"/><circle cx="6.400" cy="14.700" r="2.500"/><circle cx="10" cy="20" r="2.100"/><circle cx="17.500" cy="4.800" r="2.100"/><circle cx="29.700" cy="7.400" r="2.100"/><circle cx="27.800" cy="12.500" r="2"/><circle cx="4.500" cy="32" r=".8"/><circle cx="15" cy="30" r=".6"/><circle cx="32" cy="20" r=".4"/><path d="M18 8v5M28 9l-4 5M8 15.500l6 2" stroke="#050505" stroke-width="1.600"/></g></svg>
  <svg style="left:82px;top:89px" width="37" height="37" viewBox="0 0 37 37"><rect width="37" height="37" fill="#e4e4e4"/><defs><linearGradient id="g3" x1="0" y1="0" x2="0" y2="1"><stop offset="0" stop-color="#f6b173"/><stop offset=".42" stop-color="#ea8a36"/><stop offset=".5" stop-color="#dc6f10"/><stop offset="1" stop-color="#f09027"/></linearGradient></defs><circle cx="18.200" cy="18.200" r="15.800" fill="#f7941e"/><circle cx="18.200" cy="18.200" r="13.600" fill="#fbd6a6"/><circle cx="18.200" cy="18.200" r="12.500" fill="url(#g3)"/></svg>
  <svg style="left:120px;top:89px" width="37" height="37" viewBox="0 0 37 37"><rect width="37" height="37" fill="#e4e4e4"/><path d="M8 4.300h12.500L8 5.800z" fill="#222"/><path d="M4.500 2.500v3.500M4.500 30.500v3.500M31.500 30v4" stroke="#999" stroke-width=".7"/><path d="M3.500 4.500l1 1.500 1-1.500zM3.500 32l1 1.500 1-1.500zM30.500 32l1 1.500 1-1.500z" fill="#777"/><rect x="29" y="1.800" width="5" height="5" fill="none" stroke="#b4b4b4" stroke-width=".6"/><path d="M30.300 4.300h2.400M31.500 3.100v2.400" stroke="#777" stroke-width=".6"/><path d="M4 8.500h1.600v1.800H4z" fill="#1c8fc8"/><path d="M4 10.300h1.600v1.800H4z" fill="#c2187e"/><path d="M4 12.100h1.600v1.800H4z" fill="#d8c818"/><path d="M4 13.900h1.600v5H4z" fill="#222"/></svg>
  <svg style="left:158px;top:89px" width="37" height="37" viewBox="0 0 37 37"><rect width="37" height="37" fill="#e4e4e4"/><g fill="none" stroke="#4a4a4a" stroke-width=".17" stroke-linejoin="round"><path d="M18.5 0.9L27.5 5.1L34.3 12.4L33.0 22.2L28.3 30.9L18.5 32.8L8.7 30.9L4.0 22.2L2.7 12.4L9.5 5.1z"/><path d="M19.3 1.3L27.9 5.9L34.2 13.3L32.5 22.8L27.4 31.1L17.7 32.4L8.3 30.1L4.1 21.4L3.3 11.7L10.3 5.0z"/><path d="M20.1 1.7L28.2 6.6L34.0 14.1L31.9 23.4L26.5 31.2L17.0 32.0L7.9 29.3L4.2 20.6L4.0 11.1L11.2 4.9z"/><path d="M20.8 2.2L28.5 7.4L33.8 15.0L31.3 23.9L25.6 31.3L16.3 31.6L7.6 28.5L4.4 19.8L4.6 10.5L12.0 4.8z"/><path d="M21.5 2.6L28.8 8.1L33.6 15.8L30.6 24.4L24.8 31.3L15.7 31.2L7.3 27.7L4.6 19.1L5.3 10.0L12.7 4.8z"/><path d="M22.2 3.2L29.0 8.8L33.3 16.6L30.0 24.8L23.9 31.3L15.1 30.7L7.1 26.9L4.9 18.3L6.0 9.5L13.5 4.8z"/><path d="M22.8 3.7L29.2 9.6L32.9 17.3L29.3 25.2L23.1 31.2L14.5 30.2L6.9 26.1L5.2 17.6L6.7 9.1L14.3 4.9z"/><path d="M23.4 4.3L29.3 10.3L32.6 18.1L28.7 25.5L22.3 31.1L14.0 29.6L6.8 25.3L5.6 17.0L7.5 8.8L15.0 5.0z"/><path d="M23.9 4.9L29.3 11.0L32.2 18.7L28.0 25.8L21.5 30.9L13.5 29.1L6.7 24.5L5.9 16.4L8.2 8.5L15.7 5.2z"/><path d="M24.4 5.5L29.4 11.7L31.7 19.4L27.3 26.1L20.8 30.7L13.1 28.5L6.7 23.8L6.3 15.8L8.9 8.2L16.4 5.4z"/><path d="M24.8 6.1L29.3 12.4L31.3 20.0L26.7 26.2L20.1 30.4L12.7 28.0L6.7 23.0L6.8 15.2L9.6 8.0L17.0 5.6z"/><path d="M25.2 6.8L29.3 13.1L30.8 20.5L26.0 26.4L19.4 30.1L12.4 27.4L6.8 22.3L7.2 14.7L10.4 7.8L17.7 5.9z"/><path d="M25.5 7.4L29.2 13.8L30.3 21.0L25.3 26.5L18.8 29.8L12.1 26.8L6.9 21.5L7.7 14.2L11.1 7.7L18.3 6.2z"/><path d="M25.8 8.1L29.0 14.4L29.7 21.5L24.7 26.6L18.1 29.4L11.8 26.2L7.1 20.8L8.2 13.8L11.8 7.7L18.8 6.5z"/><path d="M26.0 8.7L28.8 15.0L29.2 21.9L24.0 26.6L17.6 29.0L11.6 25.6L7.3 20.2L8.7 13.4L12.5 7.6L19.4 6.9z"/><path d="M26.2 9.4L28.6 15.6L28.6 22.3L23.4 26.6L17.0 28.6L11.4 25.0L7.5 19.5L9.2 13.1L13.2 7.7L19.8 7.3z"/><path d="M26.4 10.0L28.4 16.2L28.0 22.7L22.8 26.5L16.5 28.2L11.3 24.4L7.8 18.9L9.7 12.8L13.8 7.7L20.3 7.7z"/><path d="M26.4 10.7L28.1 16.7L27.5 22.9L22.2 26.4L16.1 27.7L11.2 23.8L8.1 18.4L10.3 12.5L14.5 7.8L20.7 8.1z"/><path d="M26.5 11.3L27.8 17.2L26.9 23.2L21.7 26.3L15.7 27.2L11.1 23.2L8.4 17.8L10.8 12.3L15.1 8.0L21.1 8.6z"/><path d="M26.5 11.9L27.5 17.7L26.3 23.4L21.1 26.1L15.3 26.7L11.1 22.6L8.7 17.3L11.3 12.1L15.7 8.2L21.4 9.0z"/><path d="M23.6 1.7L30.9 8.5L35.1 17.5L30.9 26.5L23.6 33.3L13.8 32.0L5.1 27.3L3.2 17.5L5.1 7.7L13.8 3.0z"/><path d="M22.7 1.8L30.1 8.1L34.7 16.7L31.0 25.7L24.3 32.7L14.6 31.9L5.9 27.7L3.6 18.3L4.9 8.6L13.2 3.5z"/><path d="M21.9 2.0L29.4 7.8L34.3 15.9L31.1 24.8L24.9 32.0L15.4 31.8L6.7 28.1L4.0 19.0L4.8 9.5L12.6 4.1z"/><path d="M21.0 2.2L28.6 7.5L33.8 15.2L31.2 24.0L25.5 31.4L16.2 31.6L7.5 28.4L4.4 19.7L4.7 10.4L12.1 4.7z"/><path d="M20.2 2.4L27.9 7.2L33.4 14.5L31.2 23.3L26.0 30.7L16.9 31.4L8.3 28.7L4.8 20.3L4.7 11.2L11.6 5.4z"/><path d="M19.4 2.7L27.2 7.0L32.8 13.8L31.2 22.5L26.5 30.0L17.7 31.1L9.1 28.9L5.3 20.9L4.7 12.1L11.2 6.0z"/><path d="M18.7 3.1L26.4 6.8L32.3 13.2L31.1 21.7L26.9 29.3L18.4 30.8L9.9 29.1L5.8 21.5L4.8 12.9L10.8 6.7z"/><path d="M17.9 3.4L25.7 6.7L31.7 12.6L31.0 21.0L27.2 28.5L19.0 30.4L10.7 29.2L6.4 22.0L4.9 13.7L10.5 7.3z"/><path d="M17.3 3.8L25.0 6.7L31.1 12.1L30.8 20.3L27.5 27.8L19.6 30.1L11.5 29.3L6.9 22.5L5.1 14.5L10.2 8.0z"/><path d="M16.6 4.3L24.3 6.6L30.5 11.6L30.6 19.6L27.8 27.1L20.2 29.7L12.2 29.3L7.5 22.9L5.3 15.2L9.9 8.7z"/><path d="M16.0 4.7L23.6 6.7L29.9 11.2L30.4 19.0L28.0 26.4L20.8 29.2L13.0 29.3L8.0 23.3L5.6 15.9L9.8 9.3z"/><path d="M15.5 5.2L22.9 6.7L29.2 10.8L30.1 18.3L28.2 25.6L21.3 28.8L13.7 29.2L8.6 23.6L5.9 16.6L9.6 10.0z"/><path d="M15.0 5.7L22.2 6.8L28.6 10.5L29.8 17.7L28.3 24.9L21.8 28.3L14.5 29.1L9.2 23.9L6.2 17.2L9.5 10.7z"/><path d="M14.5 6.3L21.6 7.0L27.9 10.2L29.5 17.2L28.3 24.2L22.2 27.8L15.2 28.9L9.8 24.2L6.6 17.9L9.4 11.3z"/><path d="M14.1 6.8L21.0 7.2L27.3 10.0L29.1 16.6L28.4 23.5L22.6 27.3L15.8 28.7L10.4 24.4L7.0 18.4L9.4 12.0z"/><path d="M13.7 7.4L20.4 7.4L26.6 9.8L28.7 16.2L28.3 22.8L22.9 26.8L16.5 28.5L11.0 24.6L7.4 19.0L9.4 12.6z"/><path d="M13.3 8.0L19.8 7.6L26.0 9.6L28.3 15.7L28.3 22.2L23.2 26.3L17.1 28.2L11.6 24.7L7.8 19.5L9.5 13.2z"/><path d="M13.1 8.5L19.3 7.9L25.3 9.6L27.9 15.3L28.2 21.5L23.5 25.7L17.6 27.9L12.2 24.8L8.3 19.9L9.6 13.8z"/><path d="M12.8 9.1L18.8 8.2L24.7 9.5L27.4 14.9L28.0 20.9L23.7 25.2L18.2 27.6L12.8 24.9L8.8 20.3L9.7 14.3z"/><path d="M12.6 9.7L18.3 8.5L24.1 9.5L27.0 14.6L27.8 20.3L23.9 24.7L18.7 27.3L13.4 24.9L9.3 20.7L9.9 14.9z"/></g></svg>
  <svg style="left:196px;top:89px" width="37" height="37" viewBox="0 0 37 37"><rect width="37" height="37" fill="#e4e4e4"/><g fill="#f28478"><path d="M18 18.900C15.300 12 16 5 18 2.200 20 5 20.700 12 18 18.900z" transform="rotate(0 18 18.900)"/><path d="M18 18.900C15.300 12 16 5 18 2.200 20 5 20.700 12 18 18.900z" transform="rotate(18 18 18.900)"/><path d="M18 18.900C15.300 12 16 5 18 2.200 20 5 20.700 12 18 18.900z" transform="rotate(36 18 18.900)"/><path d="M18 18.900C15.300 12 16 5 18 2.200 20 5 20.700 12 18 18.900z" transform="rotate(54 18 18.900)"/><path d="M18 18.900C15.300 12 16 5 18 2.200 20 5 20.700 12 18 18.900z" transform="rotate(72 18 18.900)"/><path d="M18 18.900C15.300 12 16 5 18 2.200 20 5 20.700 12 18 18.900z" transform="rotate(90 18 18.900)"/><path d="M18 18.900C15.300 12 16 5 18 2.200 20 5 20.700 12 18 18.900z" transform="rotate(108 18 18.900)"/><path d="M18 18.900C15.300 12 16 5 18 2.200 20 5 20.700 12 18 18.900z" transform="rotate(126 18 18.900)"/><path d="M18 18.900C15.300 12 16 5 18 2.200 20 5 20.700 12 18 18.900z" transform="rotate(144 18 18.900)"/><path d="M18 18.900C15.300 12 16 5 18 2.200 20 5 20.700 12 18 18.900z" transform="rotate(162 18 18.900)"/><path d="M18 18.900C15.300 12 16 5 18 2.200 20 5 20.700 12 18 18.900z" transform="rotate(180 18 18.900)"/><path d="M18 18.900C15.300 12 16 5 18 2.200 20 5 20.700 12 18 18.900z" transform="rotate(198 18 18.900)"/><path d="M18 18.900C15.300 12 16 5 18 2.200 20 5 20.700 12 18 18.900z" transform="rotate(216 18 18.900)"/><path d="M18 18.900C15.300 12 16 5 18 2.200 20 5 20.700 12 18 18.900z" transform="rotate(234 18 18.900)"/><path d="M18 18.900C15.300 12 16 5 18 2.200 20 5 20.700 12 18 18.900z" transform="rotate(252 18 18.900)"/><path d="M18 18.900C15.300 12 16 5 18 2.200 20 5 20.700 12 18 18.900z" transform="rotate(270 18 18.900)"/><path d="M18 18.900C15.300 12 16 5 18 2.200 20 5 20.700 12 18 18.900z" transform="rotate(288 18 18.900)"/><path d="M18 18.900C15.300 12 16 5 18 2.200 20 5 20.700 12 18 18.900z" transform="rotate(306 18 18.900)"/><path d="M18 18.900C15.300 12 16 5 18 2.200 20 5 20.700 12 18 18.900z" transform="rotate(324 18 18.900)"/><path d="M18 18.900C15.300 12 16 5 18 2.200 20 5 20.700 12 18 18.900z" transform="rotate(342 18 18.900)"/></g><g fill="#ea6258"><path d="M18 18.900C16.400 13 16.800 8 18 4.500 19.200 8 19.600 13 18 18.900z" transform="rotate(9 18 18.900)"/><path d="M18 18.900C16.400 13 16.800 8 18 4.500 19.200 8 19.600 13 18 18.900z" transform="rotate(27 18 18.900)"/><path d="M18 18.900C16.400 13 16.800 8 18 4.500 19.200 8 19.600 13 18 18.900z" transform="rotate(45 18 18.900)"/><path d="M18 18.900C16.400 13 16.800 8 18 4.500 19.200 8 19.600 13 18 18.900z" transform="rotate(63 18 18.900)"/><path d="M18 18.900C16.400 13 16.800 8 18 4.500 19.200 8 19.600 13 18 18.900z" transform="rotate(81 18 18.900)"/><path d="M18 18.900C16.400 13 16.800 8 18 4.500 19.200 8 19.600 13 18 18.900z" transform="rotate(99 18 18.900)"/><path d="M18 18.900C16.400 13 16.800 8 18 4.500 19.200 8 19.600 13 18 18.900z" transform="rotate(117 18 18.900)"/><path d="M18 18.900C16.400 13 16.800 8 18 4.500 19.200 8 19.600 13 18 18.900z" transform="rotate(135 18 18.900)"/><path d="M18 18.900C16.400 13 16.800 8 18 4.500 19.200 8 19.600 13 18 18.900z" transform="rotate(153 18 18.900)"/><path d="M18 18.900C16.400 13 16.800 8 18 4.500 19.200 8 19.600 13 18 18.900z" transform="rotate(171 18 18.900)"/><path d="M18 18.900C16.400 13 16.800 8 18 4.500 19.200 8 19.600 13 18 18.900z" transform="rotate(189 18 18.900)"/><path d="M18 18.900C16.400 13 16.800 8 18 4.500 19.200 8 19.600 13 18 18.900z" transform="rotate(207 18 18.900)"/><path d="M18 18.900C16.400 13 16.800 8 18 4.500 19.200 8 19.600 13 18 18.900z" transform="rotate(225 18 18.900)"/><path d="M18 18.900C16.400 13 16.800 8 18 4.500 19.200 8 19.600 13 18 18.900z" transform="rotate(243 18 18.900)"/><path d="M18 18.900C16.400 13 16.800 8 18 4.500 19.200 8 19.600 13 18 18.900z" transform="rotate(261 18 18.900)"/><path d="M18 18.900C16.400 13 16.800 8 18 4.500 19.200 8 19.600 13 18 18.900z" transform="rotate(279 18 18.900)"/><path d="M18 18.900C16.400 13 16.800 8 18 4.500 19.200 8 19.600 13 18 18.900z" transform="rotate(297 18 18.900)"/><path d="M18 18.900C16.400 13 16.800 8 18 4.500 19.200 8 19.600 13 18 18.900z" transform="rotate(315 18 18.900)"/><path d="M18 18.900C16.400 13 16.800 8 18 4.500 19.200 8 19.600 13 18 18.900z" transform="rotate(333 18 18.900)"/><path d="M18 18.900C16.400 13 16.800 8 18 4.500 19.200 8 19.600 13 18 18.900z" transform="rotate(351 18 18.900)"/></g><circle cx="18" cy="18.900" r="5" fill="#6e5a28"/><circle cx="18" cy="18.900" r="4" fill="#d9b455"/><circle cx="18" cy="18.900" r="2.200" fill="#ecd98a"/></svg>
  <svg style="left:233px;top:88.80000000000001px" width="36" height="37.200" viewBox="0 0 36 37.200"><rect width="36" height="37.200" fill="#fff"/><rect x="1.750" y="1.750" width="32.500" height="33.700" fill="#e9e9e9" stroke="#0a0a0a" stroke-width="1.500"/><circle cx="18" cy="18.3" r="16" fill="#2e3192"/><path d="M26.7 6.7L24.7 16.5L32.2 23.3L22.1 24.4L18.0 33.6L13.9 24.4L3.8 23.3L11.3 16.5L9.3 6.7L18.0 11.7z" fill="#ed1e79"/><path d="M18.0 3.5L22.4 12.6L32.5 14.0L25.2 21.0L26.9 31.0L18.0 26.2L9.1 31.0L10.8 21.0L3.5 14.0L13.6 12.6z" fill="#fff200"/><rect x="27" y="28.200" width="9" height="9" fill="#0a0a0a"/><rect x="28.300" y="29.500" width="7.700" height="7.700" fill="#fff"/><path d="M29.500 32.800h5.500M32.250 30v5.600" stroke="#0a0a0a" stroke-width="1.200"/></svg>
  <svg style="left:12px;top:263px" width="18" height="12" viewBox="0 0 18 12"><path d="M0 0h2v10H0zM3.200 0h2v10h-2zM6.400 0h2v10h-2z" fill="#c8c8c8"/><path d="M9.500 .8l1.600-.6 3.400 9.400-1.600.6z" fill="#c8c8c8"/><path d="M14.500 9.500h3.500l-1.750 2z" fill="#c8c8c8"/></svg>
  <svg style="left:169px;top:263px" width="12" height="12" viewBox="0 0 12 12"><path d="M2 0v7h7" fill="none" stroke="#6e6e6e" stroke-width="2"/><path d="M8 3.500l4 3.500-4 3.500z" fill="#6e6e6e"/></svg>
  <svg style="left:196px;top:262px" width="18" height="14" viewBox="0 0 18 14"><path d="M7 4H4.500a3 3 0 0 0 0 6H7M11 4h2.500a3 3 0 0 1 0 6H11" fill="none" stroke="#6e6e6e" stroke-width="1.600"/><path d="M2 1l14 12" stroke="#6e6e6e" stroke-width="1.400"/></svg>
  <svg style="left:228px;top:263px" width="13" height="13" viewBox="0 0 13 13"><path d="M.6 .6h11.800v11.800H.6z" fill="none" stroke="#6e6e6e" stroke-width="1.200"/><path d="M3 4h7M3 6.500h7M3 9h7" stroke="#6e6e6e" stroke-width="1"/></svg>
  <svg style="left:258px;top:263px" width="13" height="13" viewBox="0 0 13 13"><path d="M.6 .6h11.800v11.800H.6z" fill="none" stroke="#c8c8c8" stroke-width="1.200"/><path d="M3.500 6.500h6M6.500 3.500v6" stroke="#c8c8c8" stroke-width="1.300"/></svg>
  <svg style="left:288px;top:262px" width="12" height="14" viewBox="0 0 12 14"><path d="M0 2.500h12M4 2.500V.8h4v1.700" fill="none" stroke="#6e6e6e" stroke-width="1.200"/><path d="M1.500 4.500h9V13.400h-9z" fill="none" stroke="#6e6e6e" stroke-width="1.200"/><path d="M4 6v5.500M6 6v5.500M8 6v5.500" stroke="#6e6e6e" stroke-width=".9"/></svg>
  <div class="a" style="left:0;top:281px;width:338px;height:4px;background:#3a3a3a"></div>
  <div class="tabbar" style="left:-1px;top:284px;width:339px;height:29px"></div>
  <div class="tab on" style="left:-1px;top:284px;width:62px;height:29px"></div>
  <div class="tab" style="left:61px;top:284px;width:84px;height:29px"></div>
  <div class="tab" style="left:145px;top:284px;width:103px;height:29px"></div>
  <svg style="left:4.5px;top:294px" width="6" height="9" viewBox="0 0 6 9"><path fill="none" stroke="#a4a4a4" stroke-width=".9" d="M.6 3.300L3 .9l2.400 2.400M.6 5.700L3 8.100l2.400-2.400"/></svg>
  <span class="t b" style="left:17.7px;top:293.0px;font-size:12px;color:#fff;letter-spacing:0.30px">Trazo</span>
  <span class="t b" style="left:70.9px;top:293.0px;font-size:12px;color:#b6b6b6;letter-spacing:0.07px">Degradado</span>
  <span class="t b" style="left:155.6px;top:293.0px;font-size:12px;color:#b6b6b6;letter-spacing:0.12px">Transparencia</span>
  <svg style="left:319px;top:294px" width="12" height="9" viewBox="0 0 12 9"><path d="M0 1h12M0 4.500h12M0 8h12" stroke="#bcbcbc" stroke-width="1.100" fill="none"/></svg>
  <div class="a" style="left:-1px;top:313px;width:339px;height:38px;background:#535353"></div>
  <span class="t" style="left:5.5px;top:327.0px;font-size:12.1px;color:#d6d6d6;letter-spacing:0.03px">Grosor:</span>
  <div class="dd" style="left:50.4px;top:321.6px;width:108px;height:22.800px;border-radius:3px"></div>
  <div class="a" style="left:70.4px;top:322.6px;width:1px;height:20.800px;background:#5c5c5c"></div>
  <div class="a" style="left:137.6px;top:322.6px;width:1px;height:20.800px;background:#5c5c5c"></div>
  <svg style="left:55.7px;top:324.5px" width="10" height="17" viewBox="0 0 10 17"><path fill="none" stroke="#e0e0e0" stroke-width="1.300" d="M1.500 5.500l3.500-3.500 3.500 3.500M1.500 11.500l3.500 3.500 3.500-3.500"/></svg>
  <span class="t" style="left:75.4px;top:327.0px;font-size:12.1px;color:#f0f0f0;letter-spacing:0.49px">6 pt</span>
  <svg style="left:143.5px;top:330.5px" width="10" height="6" viewBox="0 0 10 6"><path fill="none" stroke="#e0e0e0" stroke-width="1.400" d="M1 1l4 4 4-4"/></svg>
  <div class="a" style="left:0;top:351px;width:338px;height:4px;background:#3a3a3a"></div>
  <div class="tabbar" style="left:-1px;top:354px;width:339px;height:31.5px"></div>
  <div class="tab on" style="left:-1px;top:354px;width:83px;height:31.5px"></div>
  <div class="tab" style="left:82px;top:354px;width:111px;height:31.5px"></div>
  <span class="t b" style="left:9.7px;top:363.8px;font-size:12px;color:#fff;letter-spacing:0.06px">Apariencia</span>
  <span class="t b" style="left:92.6px;top:363.8px;font-size:12px;color:#b6b6b6;letter-spacing:-0.06px">Estilos gráficos</span>
  <svg style="left:319px;top:365px" width="12" height="9" viewBox="0 0 12 9"><path d="M0 1h12M0 4.500h12M0 8h12" stroke="#bcbcbc" stroke-width="1.100" fill="none"/></svg>
  <div class="a" style="left:0;top:385px;width:338px;height:4px;background:#3a3a3a"></div>
  <div class="tabbar" style="left:-1px;top:389px;width:339px;height:31px"></div>
  <div class="tab on" style="left:-1px;top:389px;width:56px;height:31px"></div>
  <div class="tab" style="left:55px;top:389px;width:126px;height:31px"></div>
  <div class="tab" style="left:181px;top:389px;width:113px;height:31px"></div>
  <span class="t b" style="left:9.7px;top:398.8px;font-size:12px;color:#fff;letter-spacing:-0.23px">Capas</span>
  <span class="t b" style="left:65px;top:399.2px;font-size:12px;color:#b6b6b6;width:115.5px;overflow:hidden">Exportación de recursos</span>
  <span class="t b" style="left:191.0px;top:398.8px;font-size:12px;color:#b6b6b6;letter-spacing:0.14px">Mesas de trabajo</span>
  <svg style="left:319px;top:400px" width="12" height="9" viewBox="0 0 12 9"><path d="M0 1h12M0 4.500h12M0 8h12" stroke="#bcbcbc" stroke-width="1.100" fill="none"/></svg>
  <div class="a" style="left:-1px;top:420px;width:339px;height:177px;background:#535353"></div>
  <div class="a" style="left:5px;top:428px;width:327px;height:145px;box-sizing:border-box;border:1px solid #5e5e5e;border-top-color:#484848;border-left-color:#484848"></div>
  <div class="a" style="left:6px;top:451.6px;width:325px;height:23.200px;background:#4f607e"></div>
  <div class="a" style="left:29.299999999999955px;top:429px;width:1px;height:45.800px;background:rgba(0,0,0,.13)"></div>
  <div class="a" style="left:52.5px;top:429px;width:1px;height:45.800px;background:rgba(0,0,0,.13)"></div>
  <div class="a" style="left:60.5px;top:429px;width:1px;height:45.800px;background:rgba(0,0,0,.13)"></div>
  <div class="a" style="left:290px;top:429px;width:1px;height:45.800px;background:rgba(0,0,0,.13)"></div>
  <div class="a" style="left:6px;top:474.8px;width:325px;height:1px;background:rgba(0,0,0,.15)"></div>
  <svg style="left:10px;top:459px" width="14" height="10" viewBox="0 0 14 10"><path d="M.5 5C2.500 1.800 4.800.6 7 .6S11.500 1.800 13.500 5C11.500 8.200 9.200 9.400 7 9.400S2.500 8.200.5 5z" fill="#dcdcdc"/><circle cx="7" cy="5" r="2.600" fill="#4f607e"/><circle cx="7" cy="5" r="1.300" fill="#dcdcdc"/></svg>
  <div class="a" style="left:55px;top:454px;width:4px;height:20px;background:#4dff4d"></div>
  <svg style="left:69px;top:437px" width="10" height="6" viewBox="0 0 10 6"><path fill="none" stroke="#e0e0e0" stroke-width="1.400" d="M1 1l4 4 4-4"/></svg>
  <svg style="left:89px;top:430px" width="20" height="20" viewBox="0 0 20 20"><rect x=".5" y=".5" width="19" height="19" fill="#f6f6f6" stroke="#111" stroke-width="1"/><circle cx="10.0" cy="10.0" r="8.1" fill="#2e3192" stroke="#f7931e" stroke-width=".7"/><path d="M14.4 4.1L13.4 9.1L17.2 12.5L12.1 13.1L10.0 17.8L7.9 13.1L2.8 12.5L6.6 9.1L5.6 4.1L10.0 6.7z" fill="#ed1e79"/><path d="M10.0 2.1L12.4 6.9L17.7 7.7L13.9 11.5L14.8 16.8L10.0 14.3L5.2 16.8L6.1 11.5L2.3 7.7L7.6 6.9z" fill="#fff200"/></svg>
  <span class="t" style="left:115.6px;top:434.0px;font-size:12px;color:#e6e6e6;letter-spacing:0.17px">Modo de edición de sí...</span>
  <svg style="left:95px;top:459px" width="6" height="10" viewBox="0 0 6 10"><path fill="none" stroke="#e0e0e0" stroke-width="1.400" d="M1 1l4 4-4 4"/></svg>
  <svg style="left:115px;top:454px" width="20" height="20" viewBox="0 0 20 20"><rect x=".5" y=".5" width="19" height="19" fill="#f6f6f6" stroke="#111" stroke-width="1"/><circle cx="10.0" cy="10.0" r="8.1" fill="#2e3192" stroke="#f7931e" stroke-width=".7"/><path d="M14.4 4.1L13.4 9.1L17.2 12.5L12.1 13.1L10.0 17.8L7.9 13.1L2.8 12.5L6.6 9.1L5.6 4.1L10.0 6.7z" fill="#ed1e79"/><path d="M10.0 2.1L12.4 6.9L17.7 7.7L13.9 11.5L14.8 16.8L10.0 14.3L5.2 16.8L6.1 11.5L2.3 7.7L7.6 6.9z" fill="#fff200"/></svg>
  <span class="t" style="left:141.4px;top:458.4px;font-size:12px;color:#f0f0f0;letter-spacing:-0.10px">Estrella</span>
  <svg style="left:298px;top:460px" width="9" height="9" viewBox="0 0 9 9"><circle cx="4.500" cy="4.500" r="3.600" fill="none" stroke="#e4e4e4" stroke-width="1.100"/></svg>
  <svg style="left:325px;top:453px" width="6" height="6" viewBox="0 0 6 6"><path d="M0 0h6v6z" fill="#e4e4e4"/></svg>
  <svg style="left:145px;top:578px" width="13" height="13" viewBox="0 0 13 13"><path d="M5 2.500H.6v10h10V8" fill="none" stroke="#6e6e6e" stroke-width="1.200"/><path d="M5.500 7.500l6-6M7.500 1h4.500v4.500" fill="none" stroke="#6e6e6e" stroke-width="1.200"/></svg>
  <svg style="left:174px;top:578px" width="13" height="13" viewBox="0 0 13 13"><circle cx="5" cy="5" r="4" fill="none" stroke="#6e6e6e" stroke-width="1.300"/><path d="M8 8l4.500 4.500" stroke="#6e6e6e" stroke-width="1.600"/></svg>
  <svg style="left:203px;top:578px" width="13" height="13" viewBox="0 0 13 13"><path d="M.6 .6h8.400v8.400H.6z" fill="#535353" stroke="#c8c8c8" stroke-width="1.200"/><path d="M4 4h9v9H4z" fill="#c8c8c8"/><circle cx="7" cy="7" r="2.300" fill="#535353"/></svg>
  <svg style="left:231px;top:578px" width="19" height="13" viewBox="0 0 19 13"><path d="M1 0v4h4" fill="none" stroke="#c8c8c8" stroke-width="1.500"/><path d="M4.500 1.500l3 2.500-3 2.500z" fill="#c8c8c8"/><path d="M8.600 2.600h9.800v9.800H8.600z" fill="none" stroke="#c8c8c8" stroke-width="1.200"/><path d="M10.500 7.500h6M13.500 4.500v6" stroke="#c8c8c8" stroke-width="1.300"/></svg>
  <svg style="left:264px;top:578px" width="13" height="13" viewBox="0 0 13 13"><path d="M.6 .6h11.800v11.800H.6z" fill="none" stroke="#6e6e6e" stroke-width="1.200"/><path d="M3.500 6.500h6M6.500 3.500v6" stroke="#6e6e6e" stroke-width="1.300"/></svg>
  <svg style="left:294px;top:577px" width="12" height="14" viewBox="0 0 12 14"><path d="M0 2.500h12M4 2.500V.8h4v1.700" fill="none" stroke="#6e6e6e" stroke-width="1.200"/><path d="M1.500 4.500h9V13.400h-9z" fill="none" stroke="#6e6e6e" stroke-width="1.200"/><path d="M4 6v5.500M6 6v5.500M8 6v5.500" stroke="#6e6e6e" stroke-width=".9"/></svg>
</div>

<!-- ===== Far-right icon column ===== -->
<div id="dock" class="a" style="left:906px;top:104px;width:44px;height:597px;background:#3c3c3c">
  <div class="a" style="left:0;top:0;width:44px;height:15px;background:#424242"></div>
  <svg style="left:28px;top:4px" width="9" height="6" viewBox="0 0 9 6"><path fill="none" stroke="#cfcfcf" stroke-width="1" d="M3.500 .5L1 3l2.500 2.500M7.500 .5L5 3l2.500 2.500"/></svg>
  <div class="a" style="left:0;top:15px;width:44px;height:78px;background:#535353"></div>
  <div class="a" style="left:0;top:94px;width:44px;height:503px;background:#4f4f4f"></div>
  <div class="a" style="left:10px;top:18px;width:22px;height:5px;background:repeating-linear-gradient(90deg,#3c3c3c 0 1px,#535353 1px 2px)"></div>
  <svg style="left:13px;top:31px" width="20" height="21" viewBox="0 0 20 21"><path d="M6 .8l5.500 2.500v6.500L6 12.600.6 9.800V3.300z" fill="#6a6a6a" stroke="#c8c8c8" stroke-width="1.100" stroke-linejoin="round"/><path d="M.6 3.300L6 6l5.500-2.700M6 6v6.600" fill="none" stroke="#c8c8c8" stroke-width="1.100"/><path d="M15 1h4v4h-4zM15 8h4v4h-4z" fill="#c8c8c8"/><path d="M0 16h19.500v3.800H0z" fill="#c8c8c8"/><path d="M15.500 17h3l-1.500 2z" fill="#444"/></svg>
  <svg style="left:13px;top:64px" width="20" height="19" viewBox="0 0 20 19"><path d="M.7 .7h14v14H.7z" fill="none" stroke="#c8c8c8" stroke-width="1.300"/><path d="M3.700 3.700h15v14.600h-15z" fill="#535353" stroke="#c8c8c8" stroke-width="1.300"/><path d="M11 3.700h4.500v7l-2.250-2-2.250 2z" fill="#c8c8c8"/></svg>
</div>

<div class="a" style="left:0;top:30px;width:1px;height:671px;background:#3c3c3c"></div>
<div class="a" style="left:949px;top:30px;width:1px;height:671px;background:#3c3c3c"></div>
<div id="botedge" class="a" style="left:0;top:699.300px;width:950px;height:2px;background:#363636"></div>
</body>
</html>
